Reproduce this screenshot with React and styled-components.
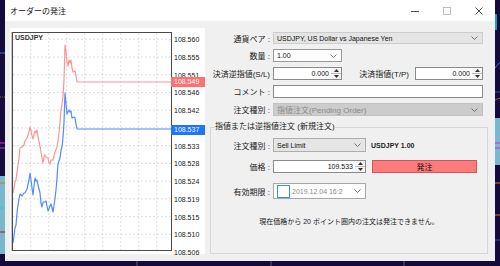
import React from "react";
import styled, { createGlobalStyle } from "styled-components";

const GlobalStyle = createGlobalStyle`
    html, body {
        margin: 0;
        padding: 0;
    }
    body {
        background: #150a3c;
        font-family: "Liberation Sans", "Noto Sans CJK JP", sans-serif;
    }
    #root {
        width: 500px;
        height: 266px;
        overflow: hidden;
    }
`;

const Page = styled.div`
    position: relative;
    width: 500px;
    height: 266px;
    overflow: hidden;
    background: #150a3c;
`;

const Backdrop = styled.svg`
    position: absolute;
    left: 0;
    top: 0;
`;

const Win = styled.div`
    position: relative;
    margin-left: 5px;
    width: 490px;
    height: 261px;
    background: #f0f0f0;
    display: flex;
    flex-direction: column;
`;

const TitleBar = styled.div`
    display: flex;
    align-items: center;
    height: 21px;
    background: #fff;
    padding-left: 5px;
`;

const Title = styled.div`
    flex: 1;
    font-size: 8px;
    color: #111;
`;

const WinButton = styled.div`
    display: flex;
    align-items: center;
    justify-content: center;
    width: 32px;
    height: 21px;
`;

const Body = styled.div`
    display: flex;
    padding: 7px 5px 0 5px;
`;

const ChartPanel = styled.div`
    display: flex;
    align-items: flex-start;
    flex-shrink: 0;
    width: 195px;
    height: 226px;
    background: #fff;
`;

const PlotFrame = styled.div`
    position: relative;
    box-sizing: border-box;
    width: 160px;
    height: 219px;
    margin: 4px 0 0 2px;
    border: 1px solid #4a4a4a;
    box-shadow: -1px 0 0 #c4c4c4;
`;

const SymbolName = styled.div`
    position: absolute;
    top: 1px;
    left: 2px;
    font-size: 7px;
    font-weight: bold;
    color: #333;
`;

const Axis = styled.div`
    position: relative;
    display: flex;
    flex-direction: column;
    justify-content: space-between;
    height: 222px;
    margin: 7px 0 0 2px;
`;

const AxisLabel = styled.div`
    font-size: 7px;
    line-height: 9px;
    color: #1a1a1a;
`;

const PriceTag = styled.div`
    position: absolute;
    left: -3px;
    top: ${props => props.top}px;
    box-sizing: border-box;
    width: 34px;
    height: 10px;
    padding-left: 3px;
    background: ${props => props.color};
    color: #fff;
    font-size: 7px;
    line-height: 10px;
`;

const FormPanel = styled.div`
    flex: 1;
    display: flex;
    flex-direction: column;
    padding-top: 4px;
    min-width: 0;
`;

const Rows = styled.div`
    display: flex;
    flex-direction: column;
    gap: 5px;
`;

const Row = styled.div`
    display: flex;
    align-items: center;
    height: ${props => props.h || 13}px;
    margin-top: ${props => props.mt || 0}px;
`;

const Label = styled.div`
    flex-shrink: 0;
    width: ${props => props.w}px;
    margin-right: ${props => props.gap || 3}px;
    text-align: right;
    white-space: nowrap;
    font-size: 8px;
    color: #1a1a1a;
`;

const Combo = styled.div`
    display: flex;
    align-items: center;
    justify-content: space-between;
    box-sizing: border-box;
    width: ${props => props.w}px;
    height: 100%;
    padding: 0 4px 0 3px;
    border: 1px solid ${props => props.border || "#a8a8a8"};
    background: ${props => props.bg || "#fff"};
    color: ${props => props.textColor || "#111"};
    font-size: ${props => props.fs || 7}px;
    white-space: nowrap;
`;

const TextBox = styled.div`
    display: flex;
    align-items: stretch;
    box-sizing: border-box;
    width: ${props => props.w}px;
    height: 100%;
    border: 1px solid #8a8a8a;
    background: #fff;
`;

const SpinValue = styled.div`
    flex: 1;
    display: flex;
    align-items: center;
    justify-content: flex-end;
    padding-right: 2px;
    font-size: 7px;
    color: #111;
`;

const Spinner = styled.div`
    display: flex;
    flex-direction: column;
    width: 10px;
    background: #f4f4f4;
`;

const SpinHalf = styled.div`
    flex: 1;
    display: flex;
    align-items: center;
    justify-content: center;
    border-top: ${props => props.sep ? "1px solid #bdbdbd" : "none"};
`;

const Group = styled.fieldset`
    box-sizing: border-box;
    height: 132px;
    margin: 6px 2px 0 5px;
    padding: 0 4px;
    border: 1px solid #d6d6d6;
    min-width: 0;
`;

const Legend = styled.legend`
    padding: 0;
    font-size: 8px;
    line-height: 10px;
    color: #1a1a1a;
`;

const GroupBody = styled.div`
    display: flex;
    flex-direction: column;
    padding-top: 6px;
`;

const Info = styled.div`
    margin-left: 5px;
    font-size: 7px;
    font-weight: bold;
    color: #222;
`;

const OrderButton = styled.div`
    display: flex;
    align-items: center;
    justify-content: center;
    box-sizing: border-box;
    width: 105px;
    height: 100%;
    margin-left: 6px;
    background: #ff7b7b;
    border: 1px solid #c85a5a;
    font-size: 8px;
    color: #111;
`;

const CheckBox = styled.div`
    box-sizing: border-box;
    width: 13px;
    height: 13px;
    margin-right: 2px;
    border: 1px solid #3a8ee6;
    background: #fff;
`;

const DateText = styled.div`
    flex: 1;
    font-size: 7px;
    color: #8a8a8a;
`;

const Note = styled.div`
    margin-top: 18px;
    text-align: center;
    font-size: 7px;
    line-height: 9px;
    color: #1a1a1a;
`;

const Chevron = () => (
    <svg width="7" height="4" viewBox="0 0 7 4">
        <path d="M0.5 0.5 L3.5 3.5 L6.5 0.5" fill="none" stroke="#666" strokeWidth="0.9" />
    </svg>
);

const SpinBox = ({value, w}) => (
    <TextBox w={w}>
        <SpinValue>{value}</SpinValue>
        <Spinner>
            <SpinHalf>
                <svg width="5" height="3" viewBox="0 0 5 3"><path d="M0 3 L2.5 0 L5 3 Z" fill="#333" /></svg>
            </SpinHalf>
            <SpinHalf sep>
                <svg width="5" height="3" viewBox="0 0 5 3"><path d="M0 0 L2.5 3 L5 0 Z" fill="#333" /></svg>
            </SpinHalf>
        </Spinner>
    </TextBox>
);

const askPoints = [
    [13,193],[14,188],[15,182],[16,180],[17,172],[18,165],[19,158],[20,148],[22,147],[24,145],[25,141],
    [27,138],[29,132],[30,127],[31,131],[32,136],[33,139],[34,134],[35,131],[36,133],[37,130],[38,136],
    [39,142],[40,146],[41,152],[42,158],[43,163],[44,157],[45,155],[46,157],[48,158],[49,163],[50,164],
    [51,160],[53,160],[54,156],[55,152],[57,147],[58,141],[59,133],[60,122],[61,110],[62,104],[63,96],
    [64,80],[65,45],[66,52],[67,62],[68,66],[69,60],[70,63],[71,60],[72,68],[73,72],[75,71],[76,76],
    [77,82],[172,82]
];

const bidPoints = [
    [13,243],[14,236],[15,228],[16,225],[17,213],[18,205],[19,199],[20,194],[22,196],[24,193],[25,193],
    [27,189],[29,180],[30,173],[31,180],[32,188],[33,195],[34,186],[35,178],[36,181],[37,180],[38,185],
    [40,193],[41,203],[42,207],[43,202],[45,202],[46,201],[47,206],[48,211],[50,206],[51,204],[52,208],
    [53,212],[54,205],[55,199],[56,190],[57,178],[58,164],[60,158],[61,150],[62,147],[63,138],[64,122],
    [65,93],[66,103],[67,114],[68,112],[69,110],[70,112],[71,111],[72,118],[74,117],[75,118],[76,124],
    [77,129],[172,129]
];

// page coords -> plot coords (plot inner box starts at 13,33)
const toPlot = (pts) => pts.map(([x, y]) => `${x - 13},${y - 33}`).join(" ");

const axisLabels = [
    "108.560", "108.555", "108.551", "108.546", "108.542", "108.537", "108.533",
    "108.528", "108.524", "108.519", "108.515", "108.510", "108.506"
];

const Plot = () => {
    const hLines = Array.from({length: 12}, (_, i) => 6.3 + i * 17.73);
    const vLines = Array.from({length: 8}, (_, i) => 17.7 + i * 18);
    return (
        <svg width="158" height="217" viewBox="0 0 158 217" style={{display: "block"}}>
            {hLines.map(y => (
                <line key={"h" + y} x1="0" x2="158" y1={y} y2={y} stroke="#d6d6d6" strokeWidth="0.8" strokeDasharray="2 2" />
            ))}
            {vLines.map(x => (
                <line key={"v" + x} y1="0" y2="217" x1={x} x2={x} stroke="#d6d6d6" strokeWidth="0.8" strokeDasharray="2 2" />
            ))}
            <polyline points={toPlot(askPoints)} fill="none" stroke="#ff9494" strokeWidth="1.2" strokeLinejoin="round" />
            <polyline points={toPlot(bidPoints)} fill="none" stroke="#4f8cff" strokeWidth="1.2" strokeLinejoin="round" />
        </svg>
    );
};

const Background = () => (
    <Backdrop width="500" height="266" viewBox="0 0 500 266">
        <rect width="500" height="266" fill="#150a3c" />
        <line x1="0" x2="5" y1="53" y2="53" stroke="#3d6fd6" />
        <line x1="0" x2="5" y1="97" y2="97" stroke="#8b5a3c" strokeDasharray="1 1" />
        <line x1="0" x2="5" y1="143" y2="143" stroke="#cc33cc" />
        <line x1="0" x2="5" y1="148" y2="148" stroke="#cc33cc" />
        <rect x="0" y="176" width="5" height="78" fill="#79b8cc" />
        <line x1="0" x2="5" y1="183" y2="183" stroke="#e0701a" />
        <line x1="0" x2="5" y1="208" y2="208" stroke="#28c8e0" />
        <line x1="0" x2="5" y1="232" y2="232" stroke="#c01010" />
        <line x1="496" x2="496" y1="14" y2="30" stroke="#28c8e0" strokeWidth="1.5" />
        <line x1="495" x2="500" y1="68" y2="62" stroke="#3d6fd6" />
        <line x1="495" x2="500" y1="92" y2="92" stroke="#3050a0" />
        <line x1="495" x2="500" y1="100" y2="98" stroke="#8b5a3c" />
        <rect x="495" y="118" width="5" height="47" fill="#7ab6cc" />
        <line x1="495" x2="500" y1="143" y2="143" stroke="#cc33cc" />
        <line x1="495" x2="500" y1="148" y2="148" stroke="#cc33cc" />
        <line x1="495" x2="500" y1="183" y2="183" stroke="#e07a20" />
        <line x1="495" x2="500" y1="215" y2="215" stroke="#e07a20" />
        <line x1="495" x2="500" y1="240" y2="240" stroke="#3050a0" />
        <line x1="137" x2="137" y1="258" y2="266" stroke="#5a5a78" />
        <line x1="271" x2="271" y1="258" y2="266" stroke="#5a5a78" />
        <line x1="404" x2="404" y1="258" y2="266" stroke="#5a5a78" />
    </Backdrop>
);

const App = () => {
    return (
        <Page>
            <GlobalStyle />
            <Background />
            <Win>
                <TitleBar>
                    <Title>オーダーの発注</Title>
                    <WinButton>
                        <svg width="8" height="8" viewBox="0 0 8 8"><line x1="0" x2="8" y1="4.5" y2="4.5" stroke="#222" strokeWidth="0.8" /></svg>
                    </WinButton>
                    <WinButton>
                        <svg width="8" height="8" viewBox="0 0 8 8"><rect x="0.5" y="0.5" width="7" height="7" fill="none" stroke="#b0b0b0" strokeWidth="0.8" /></svg>
                    </WinButton>
                    <WinButton>
                        <svg width="8" height="8" viewBox="0 0 8 8"><path d="M0.5 0.5 L7.5 7.5 M7.5 0.5 L0.5 7.5" stroke="#222" strokeWidth="0.8" /></svg>
                    </WinButton>
                </TitleBar>
                <Body>
                    <ChartPanel>
                        <PlotFrame>
                            <Plot />
                            <SymbolName>USDJPY</SymbolName>
                        </PlotFrame>
                        <Axis>
                            {axisLabels.map(l => <AxisLabel key={l}>{l}</AxisLabel>)}
                            <PriceTag top={42} color="#ff7070">108.549</PriceTag>
                            <PriceTag top={90} color="#1f74ff">108.537</PriceTag>
                        </Axis>
                    </ChartPanel>
                    <FormPanel>
                        <Rows>
                            <Row h={12}>
                                <Label w={65}>通貨ペア :</Label>
                                <Combo w={210} bg="#e5e5e5" border="#cccccc">
                                    <span>USDJPY, US Dollar vs Japanese Yen</span>
                                    <Chevron />
                                </Combo>
                            </Row>
                            <Row>
                                <Label w={65}>数量 :</Label>
                                <Combo w={69} border="#9a9a9a">
                                    <span>1.00</span>
                                    <Chevron />
                                </Combo>
                            </Row>
                            <Row>
                                <Label w={65}>決済逆指値(S/L)</Label>
                                <SpinBox w={69} value="0.000" />
                                <Label w={67} gap={6}>決済指値(T/P)</Label>
                                <SpinBox w={68} value="0.000" />
                            </Row>
                            <Row>
                                <Label w={65}>コメント :</Label>
                                <TextBox w={210} />
                            </Row>
                            <Row>
                                <Label w={65}>注文種別 :</Label>
                                <Combo w={210} bg="#cccccc" border="#c2c2c2" textColor="#8a8a8a" fs={8}>
                                    <span>指値注文(Pending Order)</span>
                                    <Chevron />
                                </Combo>
                            </Row>
                        </Rows>
                        <Group>
                            <Legend>指値または逆指値注文 (新規注文)</Legend>
                            <GroupBody>
                                <Row h={14}>
                                    <Label w={55}>注文種別 :</Label>
                                    <Combo w={93} bg="#e5e5e5" border="#adadad">
                                        <span>Sell Limit</span>
                                        <Chevron />
                                    </Combo>
                                    <Info>USDJPY 1.00</Info>
                                </Row>
                                <Row mt={8}>
                                    <Label w={55}>価格 :</Label>
                                    <SpinBox w={93} value="109.533" />
                                    <OrderButton>発注</OrderButton>
                                </Row>
                                <Row h={16} mt={10}>
                                    <Label w={55}>有効期限 :</Label>
                                    <Combo w={93} border="#a8a8a8" bg="#fff">
                                        <CheckBox />
                                        <DateText>2019.12.04 16:2</DateText>
                                        <Chevron />
                                    </Combo>
                                </Row>
                                <Note>現在価格から 20 ポイント圏内の注文は発注できません。</Note>
                            </GroupBody>
                        </Group>
                    </FormPanel>
                </Body>
            </Win>
        </Page>
    );
};

export default App;
